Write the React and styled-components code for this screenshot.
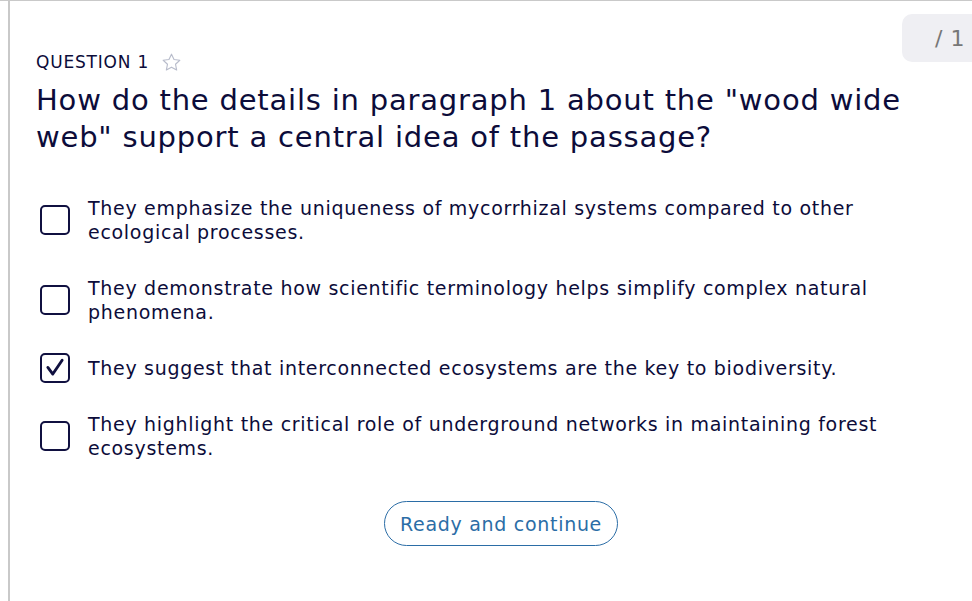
import styled, { createGlobalStyle } from 'styled-components';

const GlobalStyle = createGlobalStyle`
  html, body {
    margin: 0;
    padding: 0;
    background: #ffffff;
  }
  body {
    font-family: "DejaVu Sans", Verdana, sans-serif;
    color: #0c0c3a;
  }
`;

const Page = styled.div`
  width: 972px;
  height: 601px;
  box-sizing: border-box;
  border-top: 1px solid #c9c9c9;
  padding-left: 8px;
  overflow: hidden;
`;

const Panel = styled.div`
  height: 100%;
  border-left: 2px solid #c9c9c9;
  padding: 13px 0 0 26px;
  box-sizing: border-box;
  position: relative;
`;

const ScoreBadge = styled.div`
  position: absolute;
  top: 13px;
  right: -20px;
  width: 90px;
  height: 48px;
  background: #efeff3;
  border-radius: 10px;
  color: #777777;
  font-size: 22px;
  letter-spacing: 0.5px;
  display: flex;
  align-items: center;
  padding-left: 33px;
  box-sizing: border-box;
`;

const QuestionLabel = styled.div`
  display: flex;
  align-items: center;
  gap: 12px;
  margin-top: 37px;
  font-size: 17px;
  letter-spacing: 0.8px;
  line-height: 22px;
`;

const Heading = styled.h1`
  margin: 9px 0 0;
  font-size: 29px;
  font-weight: normal;
  letter-spacing: 0.8px;
  line-height: 37px;
  max-width: 900px;
`;

const Options = styled.div`
  display: flex;
  flex-direction: column;
  gap: 32px;
  margin-top: 40px;
  padding-left: 4px;
`;

const Option = styled.label`
  display: flex;
  align-items: center;
  gap: 18px;
  cursor: pointer;
`;

const Box = styled.span`
  flex: 0 0 auto;
  width: 26px;
  height: 26px;
  margin: -3px 0;
  border: 2px solid #101040;
  border-radius: 5px;
  display: flex;
  align-items: center;
  justify-content: center;
`;

const OptionText = styled.span`
  font-size: 19px;
  letter-spacing: 0.7px;
  line-height: 24px;
  max-width: 800px;
`;

const Footer = styled.div`
  display: flex;
  justify-content: center;
  margin-top: 41px;
  padding-right: 6px;
`;

const ReadyButton = styled.button`
  height: 45px;
  padding: 0 15px;
  border: 1px solid #2b6da6;
  border-radius: 23px;
  background: #ffffff;
  color: #2b6da6;
  font-family: "DejaVu Sans", Verdana, sans-serif;
  font-size: 19px;
  letter-spacing: 0.7px;
`;

const Star = () => (
  <svg width="21" height="21" viewBox="0 0 24 24" fill="none" stroke="#b8bccb" strokeWidth="1.3" strokeLinejoin="round">
    <path d="M12 2.5l2.9 6.1 6.6.8-4.9 4.6 1.3 6.6L12 17.3l-5.9 3.3 1.3-6.6-4.9-4.6 6.6-.8z" />
  </svg>
);

const Check = () => (
  <svg width="22" height="22" viewBox="0 0 20 20" fill="none" stroke="#101040" strokeWidth="2.6" strokeLinecap="round" strokeLinejoin="round">
    <path d="M3.5 9.5l4.5 6L16.5 3" />
  </svg>
);

const options = [
  { text: 'They emphasize the uniqueness of mycorrhizal systems compared to other ecological processes.', checked: false },
  { text: 'They demonstrate how scientific terminology helps simplify complex natural phenomena.', checked: false },
  { text: 'They suggest that interconnected ecosystems are the key to biodiversity.', checked: true },
  { text: 'They highlight the critical role of underground networks in maintaining forest ecosystems.', checked: false },
];

export default function App() {
  return (
    <>
      <GlobalStyle />
      <Page>
        <Panel>
          <ScoreBadge>/ 1</ScoreBadge>
          <QuestionLabel>
            QUESTION 1 <Star />
          </QuestionLabel>
          <Heading>
            How do the details in paragraph 1 about the "wood wide web" support a central idea of the passage?
          </Heading>
          <Options>
            {options.map((o) => (
              <Option key={o.text}>
                <Box>{o.checked && <Check />}</Box>
                <OptionText>{o.text}</OptionText>
              </Option>
            ))}
          </Options>
          <Footer>
            <ReadyButton>Ready and continue</ReadyButton>
          </Footer>
        </Panel>
      </Page>
    </>
  );
}
